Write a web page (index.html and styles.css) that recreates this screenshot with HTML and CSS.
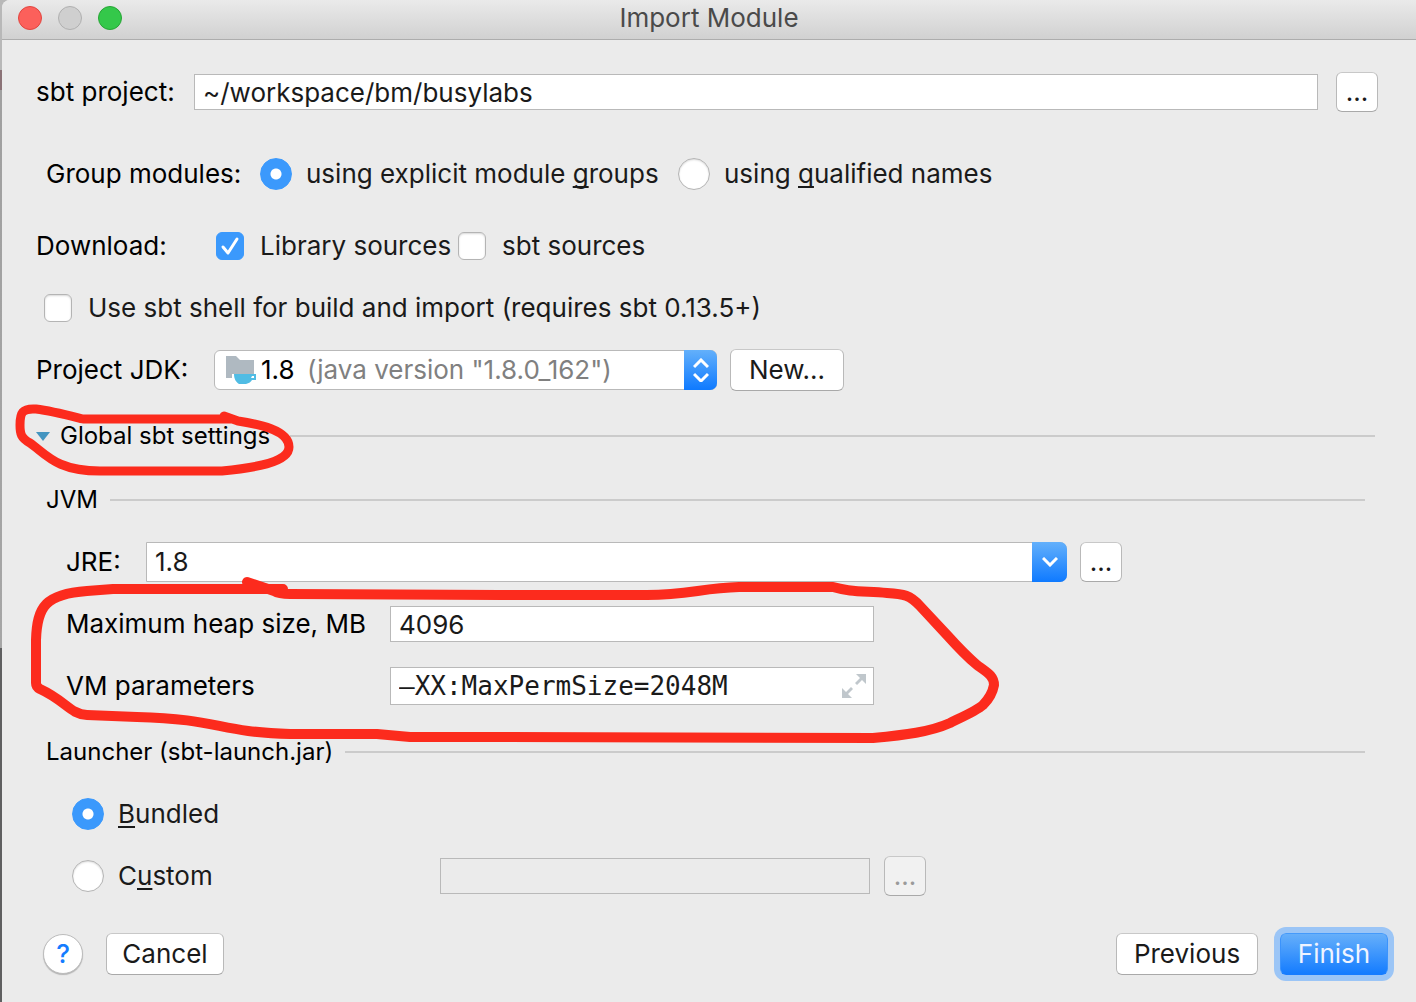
FILE: index.html
```html
<!DOCTYPE html>
<html lang="en">
<head>
<meta charset="utf-8">
<title>Import Module</title>
<link rel="stylesheet" href="styles.css">
</head>
<body>
<main class="dialog">
  <header class="titlebar">
    <div class="lights">
      <button class="light light-close" type="button" aria-label="Close"></button>
      <button class="light light-off" type="button" aria-label="Minimize" disabled></button>
      <button class="light light-zoom" type="button" aria-label="Zoom"></button>
    </div>
    <h1 class="title">Import Module</h1>
  </header>

  <form class="form">
    <div class="row row-project">
      <label class="project-label" for="project">sbt project:</label>
      <input class="field project-field" id="project" type="text" value="~/workspace/bm/busylabs">
      <button class="button browse" type="button" aria-label="Browse for project">...</button>
    </div>

    <div class="row row-group" role="radiogroup" aria-labelledby="group-label">
      <span class="group-label" id="group-label">Group modules:</span>
      <input class="radio" type="radio" name="group" id="explicit" checked>
      <label class="choice explicit-label" for="explicit">using explicit module <u>g</u>roups</label>
      <input class="radio" type="radio" name="group" id="qualified">
      <label class="choice" for="qualified">using <u>q</u>ualified names</label>
    </div>

    <div class="row">
      <span class="download-label">Download:</span>
      <input class="check" type="checkbox" id="library" checked>
      <label class="choice library-label" for="library">Library sources</label>
      <input class="check" type="checkbox" id="sources">
      <label class="choice" for="sources">sbt sources</label>
    </div>

    <div class="row row-shell">
      <input class="check" type="checkbox" id="shell">
      <label class="choice" for="shell">Use sbt shell for build and import (requires sbt 0.13.5+)</label>
    </div>

    <div class="row">
      <label class="jdk-label" for="jdk">Project JDK:</label>
      <div class="combo jdk">
        <span class="jdk-name">
          <svg class="folder" viewBox="0 0 32 28" aria-hidden="true">
            <path fill="#afb9c1" d="M1 0H11L15 4H29V18H7V22H1Z"/>
            <path fill="#50bce4" d="M9 18H31V24H27C26 26 24 27 21 28H14C11 26 9 23 9 18Z"/>
            <path fill="#fff" d="M27 20H29V22H26Z"/>
          </svg>
          1.8
        </span>
        <select class="select jdk-select" id="jdk"><option>(java version "1.8.0_162")</option></select>
        <span class="arrow jdk-arrow">
          <svg viewBox="0 0 16 24" width="16" height="24" aria-hidden="true"><path d="M1 9L8 2L15 9M1 16L8 23L15 16"/></svg>
        </span>
      </div>
      <button class="button new" type="button">New...</button>
    </div>

    <div class="section section-global">
      <button class="disclosure" type="button" aria-expanded="true">
        <svg width="14" height="9" viewBox="0 0 14 9" aria-hidden="true"><path fill="#4495c0" d="M0 0H14L7 9Z"/></svg>
        Global sbt settings
      </button>
    </div>

    <div class="settings">
      <h2 class="section">JVM</h2>
      <div class="row indent">
        <label class="jre-label" for="jre">JRE:</label>
        <div class="combo jre">
          <select class="select jre-select" id="jre"><option>1.8</option></select>
          <span class="arrow jre-arrow">
            <svg viewBox="0 0 16 10" width="16" height="10" aria-hidden="true"><path d="M1 1L8 8L15 1"/></svg>
          </span>
        </div>
        <button class="button browse jre-browse" type="button" aria-label="Browse for JRE">...</button>
      </div>
      <div class="row indent">
        <label class="vm-label" for="heap">Maximum heap size, MB</label>
        <input class="field vm-field" id="heap" type="text" value="4096">
      </div>
      <div class="row indent">
        <label class="vm-label" for="params">VM parameters</label>
        <div class="expandable">
          <input class="field mono" id="params" type="text" value="–XX:MaxPermSize=2048M">
          <button class="expand" type="button" aria-label="Expand">
            <svg width="24" height="24" viewBox="0 0 24 24" aria-hidden="true"><path fill="#c0c7cc" d="M14 0H24V10L20 6L15 11L13 9L18 4ZM0 14L4 18L9 13L11 15L6 20L10 24H0Z"/></svg>
          </button>
        </div>
      </div>

      <h2 class="section section-launcher">Launcher (sbt-launch.jar)</h2>
      <div class="row launcher">
        <input class="radio" type="radio" name="launcher" id="bundled" checked>
        <label class="choice" for="bundled"><u>B</u>undled</label>
      </div>
      <div class="row launcher">
        <input class="radio" type="radio" name="launcher" id="custom">
        <label class="choice custom-label" for="custom">C<u>u</u>stom</label>
        <input class="field custom-field" type="text" aria-label="Custom launcher" disabled>
        <button class="button browse custom-browse" type="button" aria-label="Browse for launcher" disabled>...</button>
      </div>
    </div>

    <footer class="footer">
      <button class="help" type="button">?</button>
      <button class="button cancel" type="button">Cancel</button>
      <button class="button previous" type="button">Previous</button>
      <button class="button finish" type="submit">Finish</button>
    </footer>
  </form>

  <svg class="marks" width="1010" height="760" viewBox="0 0 1010 760" aria-hidden="true">
    <path stroke-width="9" d="M224 416L238 421C258 424 289 430 289 447C289 463 252 468 222 471H100C56 471 46 454 30 443C21 438 20 434 20 425C20 413 22 408 36 409C52 411 67 415 83 419H232"/>
    <path stroke-width="10" d="M247 582L274 591Q279 594 290 594L500 595H647C688 595 702 588 739 587H833C850 592 860 591 887 593C904 594 910 595 920 606L947 635Q965 655 977 665C988 673 994 676 994 685Q992 696 983 705C976 711 960 718 950 723C930 732 905 735 873 738L500 737H410L377 734H290C217 732 220 719 137 717L87 715C70 714 66 701 40 689Q36 687 36 683V640C37 606 46 594 87 591L113 589H283"/>
  </svg>
</main>
</body>
</html>
```
FILE: styles.css
```css
* {
  box-sizing: border-box;
}

body {
  margin: 0;
  padding-left: 2px;
  min-height: 100vh;
  background: linear-gradient(#b8b8b8 70px, #8b7377 70px, #8b7377 90px, #a0a0a0 90px, #a6a6a6 648px, #5f5f60 648px);
  color: #000;
  font: 26px/32px Inter, "Liberation Sans", sans-serif;
}

input,
button,
select {
  margin: 0;
  padding: 0;
  font: inherit;
  color: #1a1a1a;
}

.dialog {
  position: relative;
  min-height: 100vh;
  border-top-left-radius: 8px;
  background: #ebebeb;
}

.titlebar {
  display: grid;
  grid-template-columns: 1fr auto 1fr;
  align-items: center;
  height: 40px;
  padding: 0 16px 4px;
  border-bottom: 1px solid #adadad;
  border-top-left-radius: 8px;
  background: linear-gradient(#eaeaea, #d1d1d1);
}

.lights {
  display: flex;
  gap: 16px;
}

.light {
  width: 24px;
  height: 24px;
  border: 1px solid;
  border-radius: 50%;
}

.light-close {
  border-color: #e2453f;
  background: #fc605b;
}

.light-off {
  border-color: #b0b0b0;
  background: #cfcfcf;
}

.light-zoom {
  border-color: #27a535;
  background: #34c84a;
}

.title {
  margin: 0;
  color: #4a4a4a;
  font-size: 26px;
  font-weight: 400;
}

.form {
  display: flex;
  flex-direction: column;
  gap: 20px;
  padding: 31px 38px 24px 34px;
}

.row {
  display: flex;
  align-items: center;
  height: 42px;
  white-space: nowrap;
}

.row-group {
  margin: 20px 0 10px;
  padding-left: 10px;
}

.row-shell {
  padding-left: 8px;
}

.choice {
  padding-left: 16px;
  color: #1a1a1a;
}

u {
  text-decoration-thickness: 2px;
  text-underline-offset: 3px;
  text-decoration-skip-ink: none;
}

.field {
  height: 36px;
  padding: 0 8px;
  border: 1px solid #b9b9b9;
  border-radius: 0;
  background: #fff;
}

.project-label {
  width: 142px;
}

.project-field {
  flex: 1;
  min-width: 0;
  margin: 0 18px 0 16px;
}

.button {
  height: 42px;
  border: 1px solid #bdbdbd;
  border-color: #c8c8c8 #b9b9b9 #a9a9a9;
  border-radius: 6px;
  background: #fff;
}

.browse {
  width: 42px;
  height: 40px;
}

.group-label {
  width: 214px;
}

.explicit-label {
  width: 386px;
}

.download-label {
  width: 180px;
}

.library-label {
  width: 214px;
}

.radio,
.check {
  flex: none;
  appearance: none;
  border: 1px solid #b4b4b4;
  background: #fff;
  box-shadow: inset 0 1px 2px #d8d8d8;
}

.radio {
  width: 32px;
  height: 32px;
  border-radius: 50%;
}

.radio:checked {
  border-color: #3b99fc;
  background: radial-gradient(circle, #fff 5px, #3b99fc 6px);
  box-shadow: none;
}

.radio + .choice {
  padding-left: 14px;
}

.check {
  width: 28px;
  height: 28px;
  border-radius: 6px;
}

.check:checked {
  border-color: #3b99fc;
  background: #3b99fc url("data:image/svg+xml,%3Csvg xmlns='http://www.w3.org/2000/svg' viewBox='0 0 26 26'%3E%3Cpath d='M6 14L11 20L20 6' fill='none' stroke='white' stroke-width='3' stroke-linecap='round' stroke-linejoin='round'/%3E%3C/svg%3E");
  box-shadow: none;
}

.jdk-label {
  width: 178px;
}

.combo {
  display: grid;
  height: 40px;
}

.combo > * {
  grid-area: 1 / 1;
}

.select {
  width: 100%;
  height: 100%;
  appearance: none;
  border: 1px solid #b9b9b9;
  background: #fff;
}

.jdk {
  flex: 0 1 503px;
  margin-right: 13px;
}

.jdk-name {
  z-index: 1;
  display: flex;
  align-items: center;
  justify-self: start;
  gap: 4px;
  padding-left: 11px;
  pointer-events: none;
}

.folder {
  width: 32px;
  height: 28px;
}

.jdk-select {
  padding-left: 92px;
  border-radius: 6px;
  color: #808080;
}

.arrow {
  display: grid;
  place-items: center;
  justify-self: end;
  border-radius: 0 7px 7px 0;
  background: linear-gradient(#63b0fb, #0f7aff);
  pointer-events: none;
}

.arrow path {
  fill: none;
  stroke: #fff;
  stroke-width: 3;
}

.jdk-arrow {
  width: 33px;
}

.jre {
  flex: 0 1 921px;
}

.jre-select {
  padding-left: 8px;
  border-radius: 0 7px 7px 0;
}

.jre-arrow {
  width: 35px;
}

.jre-label {
  width: 80px;
}

.jre-browse {
  margin-left: 13px;
}

.new {
  width: 114px;
}

.section {
  display: flex;
  align-items: center;
  gap: 12px;
  height: 42px;
  margin: 0;
  font-size: 24px;
  font-weight: 400;
}

.section::after {
  content: "";
  flex: 1;
  height: 2px;
  background: #cbcbcb;
}

.section-global {
  margin: 4px 3px 2px 0;
  gap: 20px;
}

.section-launcher {
  margin-top: 4px;
}

.disclosure {
  display: flex;
  align-items: center;
  gap: 10px;
  border: 0;
  background: none;
  color: #000;
}

.settings {
  display: flex;
  flex-direction: column;
  gap: 20px;
  padding: 0 13px 0 10px;
}

.indent {
  padding-left: 20px;
}

.vm-label {
  width: 324px;
}

.vm-field,
.expandable {
  width: 484px;
}

.expandable {
  display: grid;
  align-items: center;
}

.expandable > * {
  grid-area: 1 / 1;
}

.mono {
  height: 38px;
  font-family: "DejaVu Sans Mono", monospace;
}

.expand {
  display: grid;
  justify-self: end;
  margin-right: 8px;
  border: 0;
  background: none;
}

.launcher {
  padding-left: 26px;
}

.custom-label {
  width: 336px;
}

.custom-field {
  width: 430px;
  background: transparent;
}

.custom-browse {
  margin-left: 14px;
  background: #f1f1f1;
  color: #9a9a9a;
}

.footer {
  display: flex;
  align-items: center;
  margin-top: 16px;
  padding-left: 7px;
}

.help {
  width: 40px;
  height: 40px;
  border: 1px solid #bcbcbc;
  border-radius: 50%;
  background: #fff;
  box-shadow: 0 1px 1px #b5b5b5;
  color: #147cff;
  font-weight: 500;
}

.cancel {
  width: 118px;
  margin-left: 23px;
}

.previous {
  width: 142px;
  margin-left: auto;
}

.finish {
  width: 108px;
  margin: 0 -10px 0 22px;
  border-color: #459afb #3b93fc #177cff;
  background: linear-gradient(#66affa, #147cff);
  box-shadow: 0 0 0 6px #9bc5f6;
  color: #f0f4ff;
}

.marks {
  position: absolute;
  top: 0;
  left: -2px;
  fill: none;
  stroke: #fc2b1d;
  stroke-linecap: round;
  stroke-linejoin: round;
  pointer-events: none;
}
```
